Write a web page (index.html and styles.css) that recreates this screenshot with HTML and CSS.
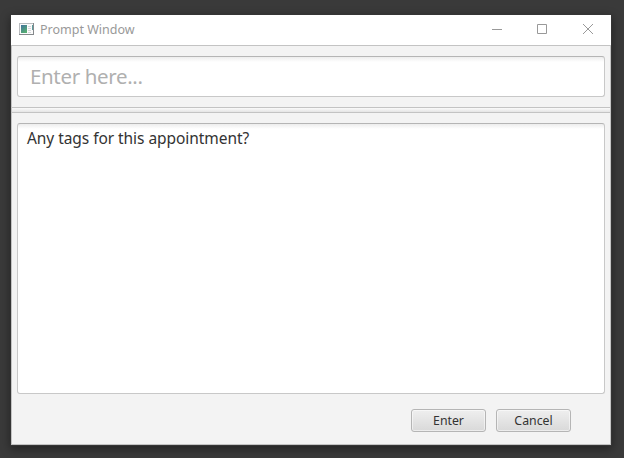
FILE: index.html
```html
<!DOCTYPE html>
<html lang="en">
<head>
<meta charset="utf-8">
<title>Prompt Window</title>
<link rel="stylesheet" href="styles.css">
</head>
<body>
<main class="window">
  <header class="titlebar">
    <svg class="app-icon" width="16" height="13" viewBox="0 0 16 13">
      <defs><linearGradient id="g" x1="0" y1="0" x2="0.6" y2="1"><stop offset="0" stop-color="#41719c"/><stop offset="1" stop-color="#55ad72"/></linearGradient></defs>
      <rect width="15" height="12" fill="#fbfbfb"/>
      <path d="M0 .5H15M.5 0V12" stroke="#b9bcbf"/>
      <path d="M0 11.5H15M14.5 0V12" stroke="#85898c"/>
      <rect x="2" y="2" width="6" height="8" fill="url(#g)"/>
      <path d="M9 3.5H12M9 5.5H12M9 7.5H12M9 9.5H12" stroke="#d4d7da"/>
      <path d="M13.5 2V7" stroke="#5b9a9b"/>
    </svg>
    <h1 class="title">Prompt Window</h1>
    <div class="controls">
      <svg class="control" width="46" height="30" viewBox="0 0 46 30"><path d="M18 14.5h10"/></svg>
      <svg class="control" width="45" height="30" viewBox="0 0 45 30"><path d="M17.5 9.5h9v9h-9z"/></svg>
      <svg class="control" width="46" height="30" viewBox="0 0 46 30"><path d="M18 9l10 10M28 9l-10 10"/></svg>
    </div>
  </header>
  <section class="content">
    <div class="input-row"><input class="field" type="text" placeholder="Enter here..."></div>
    <div class="divider"></div>
    <div class="prompt"><span class="prompt-text">Any tags for this appointment?</span></div>
    <footer class="actions">
      <button class="button">Enter</button>
      <button class="button">Cancel</button>
    </footer>
  </section>
</main>
</body>
</html>
```
FILE: styles.css
```css
* { box-sizing: border-box; }
body {
  margin: 0;
  height: 458px;
  padding: 15px 13px 13px 11px;
  overflow: hidden;
  background: #3a3a3a;
  font-family: "Noto Sans", sans-serif;
}
.window {
  height: 430px;
  display: flex;
  flex-direction: column;
  background: #fff;
  box-shadow: 0 0 0 1px #353535, 0 3px 9px 1px rgba(0, 0, 0, .4);
}
.titlebar {
  height: 30px;
  display: flex;
  align-items: center;
  padding-left: 8px;
}
.app-icon { margin-bottom: 1px; }
.title {
  margin: 0 0 0 5px;
  font-size: 12.5px;
  font-weight: 400;
  line-height: 18px;
  color: #999;
}
.controls { display: flex; margin-left: auto; }
.control { display: block; fill: none; stroke: #999; stroke-width: 1; }
.content {
  flex: 1;
  display: flex;
  flex-direction: column;
  background: #f3f3f3;
  border: 1px solid #c3c3c3;
}
.input-row { padding: 10px 5px; }
.field {
  display: block;
  width: 100%;
  height: 41px;
  padding: 0 12px 1px;
  border: 1px solid #c8c8c8;
  border-top-color: #b5b5b5;
  border-radius: 3px;
  background: linear-gradient(#ededed, #fff 5px);
  font: 20.5px "Noto Sans", sans-serif;
  letter-spacing: -.35px;
  outline: none;
}
.field::placeholder { color: #b0b0b0; opacity: 1; }
.divider {
  height: 6px;
  border: solid #c3c3c3;
  border-width: 1px 0;
  background: linear-gradient(#fafafa, #e4e4e4);
}
.prompt {
  height: 271px;
  margin: 10px 5px 0;
  padding: 3px 9px;
  border: 1px solid #c8c8c8;
  border-top-color: #b5b5b5;
  border-radius: 3px;
  background: linear-gradient(#ededed, #fff 5px);
  font-size: 15.5px;
  letter-spacing: -.06px;
  line-height: 22px;
  color: #333;
}
.actions {
  display: flex;
  justify-content: flex-end;
  gap: 10px;
  padding: 15px 39px 0 0;
}
.button {
  width: 75px;
  height: 23px;
  padding: 0;
  border: 1px solid #b5b5b5;
  border-radius: 3px;
  background: linear-gradient(#efefef, #d9d9d9);
  box-shadow: inset 0 0 0 1px rgba(255, 255, 255, .5);
  font: 12.3px "Noto Sans", sans-serif;
  color: #333;
}
```
